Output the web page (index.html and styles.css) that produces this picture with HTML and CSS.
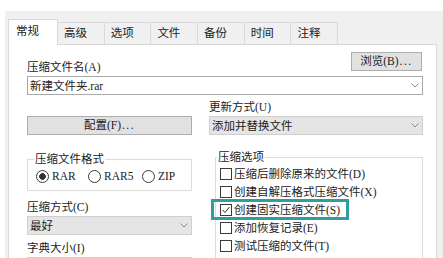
FILE: index.html
```html
<!DOCTYPE html>
<html lang="zh-CN">
<head>
<meta charset="utf-8">
<title>压缩文件名和参数</title>
<link rel="stylesheet" href="styles.css">
</head>
<body>
<div class="window">
  <div class="tabs">
    <div class="tab active">常规</div>
    <div class="tab">高级</div>
    <div class="tab">选项</div>
    <div class="tab">文件</div>
    <div class="tab">备份</div>
    <div class="tab">时间</div>
    <div class="tab">注释</div>
  </div>
  <div class="panel">
    <div class="row-top">
      <div class="lbl top-lbl">压缩文件名(A)</div>
      <div class="btn browse">浏览(B)<span class="dots">...</span></div>
    </div>
    <div class="combo white">
      <span>新建文件夹.rar</span>
      <svg class="chev" width="8" height="5" viewBox="0 0 8 5"><polyline points="0.5,0.5 4,4 7.5,0.5" fill="none" stroke="#8a8a8a" stroke-width="1"/></svg>
    </div>
    <div class="cols">
      <div class="col left">
        <div class="btn config">配置(F)<span class="dots">...</span></div>
        <fieldset class="group fmt">
          <legend>压缩文件格式</legend>
          <div class="radios">
            <span class="radio on"><i></i>RAR</span>
            <span class="radio"><i></i>RAR5</span>
            <span class="radio"><i></i>ZIP</span>
          </div>
        </fieldset>
        <div class="lbl after-group">压缩方式(C)</div>
        <div class="combo gray">
          <span>最好</span>
          <svg class="chev" width="8" height="5" viewBox="0 0 8 5"><polyline points="0.5,0.5 4,4 7.5,0.5" fill="none" stroke="#8a8a8a" stroke-width="1"/></svg>
        </div>
        <div class="lbl second">字典大小(I)</div>
        <div class="combo gray">
          <span>32 MB</span>
          <svg class="chev" width="8" height="5" viewBox="0 0 8 5"><polyline points="0.5,0.5 4,4 7.5,0.5" fill="none" stroke="#8a8a8a" stroke-width="1"/></svg>
        </div>
      </div>
      <div class="col right">
        <div class="lbl">更新方式(U)</div>
        <div class="combo gray">
          <span>添加并替换文件</span>
          <svg class="chev" width="8" height="5" viewBox="0 0 8 5"><polyline points="0.5,0.5 4,4 7.5,0.5" fill="none" stroke="#8a8a8a" stroke-width="1"/></svg>
        </div>
        <fieldset class="group opts">
          <legend>压缩选项</legend>
          <div class="check"><span class="box"></span>压缩后删除原来的文件(D)</div>
          <div class="check"><span class="box"></span>创建自解压格式压缩文件(X)</div>
          <div class="check hl"><span class="box"><svg width="10" height="10" viewBox="0 0 10 10"><polyline points="1.5,5 4,7.5 8.5,2" fill="none" stroke="#333" stroke-width="1"/></svg></span>创建固实压缩文件(S)</div>
          <div class="check"><span class="box"></span>添加恢复记录(E)</div>
          <div class="check"><span class="box"></span>测试压缩的文件(T)</div>
          <div class="check"><span class="box"></span>锁定压缩文件(L)</div>
        </fieldset>
      </div>
    </div>
  </div>
</div>
</body>
</html>
```
FILE: styles.css
```css
* { box-sizing: border-box; }
html, body {
  margin: 0;
  height: 258px;
  overflow: hidden;
  background: #fff;
}
body {
  font-family: "Liberation Serif", "Noto Sans CJK SC", serif;
  font-size: 11.5px;
  line-height: 16px;
  color: #222;
}
.window {
  margin: 11px 0 0 5px;
  height: 247px;
  background: #f0f0f0;
  padding: 8px 0 0 3px;
  overflow: hidden;
}
.tabs {
  display: flex;
  align-items: flex-end;
  height: 25px;
}
.tab {
  width: 46.7px;
  height: 22px;
  border: 1px solid #d9d9d9;
  border-left: none;
  border-bottom: none;
  padding-left: 6px;
  line-height: 20px;
  background: #f0f0f0;
  white-space: nowrap;
}
.tab.active {
  width: 50px;
  height: 26px;
  border-left: 1px solid #d9d9d9;
  background: #fff;
  margin-bottom: -1px;
  position: relative;
  z-index: 1;
  padding-left: 7px;
  line-height: 22px;
}
.panel {
  width: 429px;
  height: 240px;
  background: #fff;
  border: 1px solid #d9d9d9;
  padding: 7px 13px 0 18px;
}
.row-top {
  display: flex;
  justify-content: space-between;
  align-items: flex-start;
}
.top-lbl { margin-top: 7px; }
.btn {
  background: #e1e1e1;
  border: 1px solid #adadad;
  text-align: center;
  line-height: 17px;
  white-space: nowrap;
}
.dots { letter-spacing: 1.5px; margin-left: 1px; }
.browse {
  width: 71px;
  height: 19px;
  margin-right: 1px;
}
.combo {
  height: 19px;
  display: flex;
  align-items: center;
  justify-content: space-between;
  padding: 0 3px 0 2px;
  border: 1px solid #c6c6c6;
  white-space: nowrap;
}
.combo.white {
  margin-top: 1px;
  background: #fff;
  border-color: #a9a9a9;
}
.combo.gray {
  margin-top: 1px;
  background: #e5e5e5;
  border-color: #cfcfcf;
}
.chev { display: block; }
.cols {
  display: flex;
  gap: 17px;
  margin-top: 4px;
}
.col { display: flex; flex-direction: column; }
.col.left { width: 165px; }
.col.right { width: 214px; }
.config {
  height: 19px;
  margin-top: 17px;
}
.group {
  margin: 0;
  min-width: 0;
  border: 1px solid #dcdcdc;
}
legend {
  padding: 0 1px;
  line-height: 16px;
}
.fmt {
  margin-top: 16px;
  padding: 1px 6px 6px 6px;
}
.radios {
  display: grid;
  grid-template-columns: 52px 54px auto;
  height: 16px;
  padding-left: 2px;
}
.radio {
  display: inline-flex;
  align-items: center;
  gap: 3px;
}
.radio i {
  width: 13px;
  height: 13px;
  border: 1px solid #3a3a3a;
  border-radius: 50%;
  background: #fff;
}
.radio.on i {
  background: radial-gradient(circle, #333 0 3px, #fff 3.6px);
  border-width: 1.5px;
}
.after-group { margin-top: 8px; }
.second { margin-top: 5px; }
.opts {
  margin-top: 14px;
  margin-left: 6px;
  padding: 0 0 0 1px;
  height: 140px;
}
.check {
  position: relative;
  display: flex;
  align-items: center;
  width: fit-content;
  height: 18px;
  flex-shrink: 0;
  padding-left: 3px;
  gap: 2px;
  white-space: nowrap;
}
.box {
  width: 12px;
  height: 12px;
  border: 1px solid #3a3a3a;
  background: #fff;
  display: flex;
  align-items: center;
  justify-content: center;
}
.check.hl::after {
  content: "";
  position: absolute;
  left: -6px;
  top: -2px;
  right: -9px;
  bottom: -1px;
  border: 3px solid #2f9e9c;
}
```
